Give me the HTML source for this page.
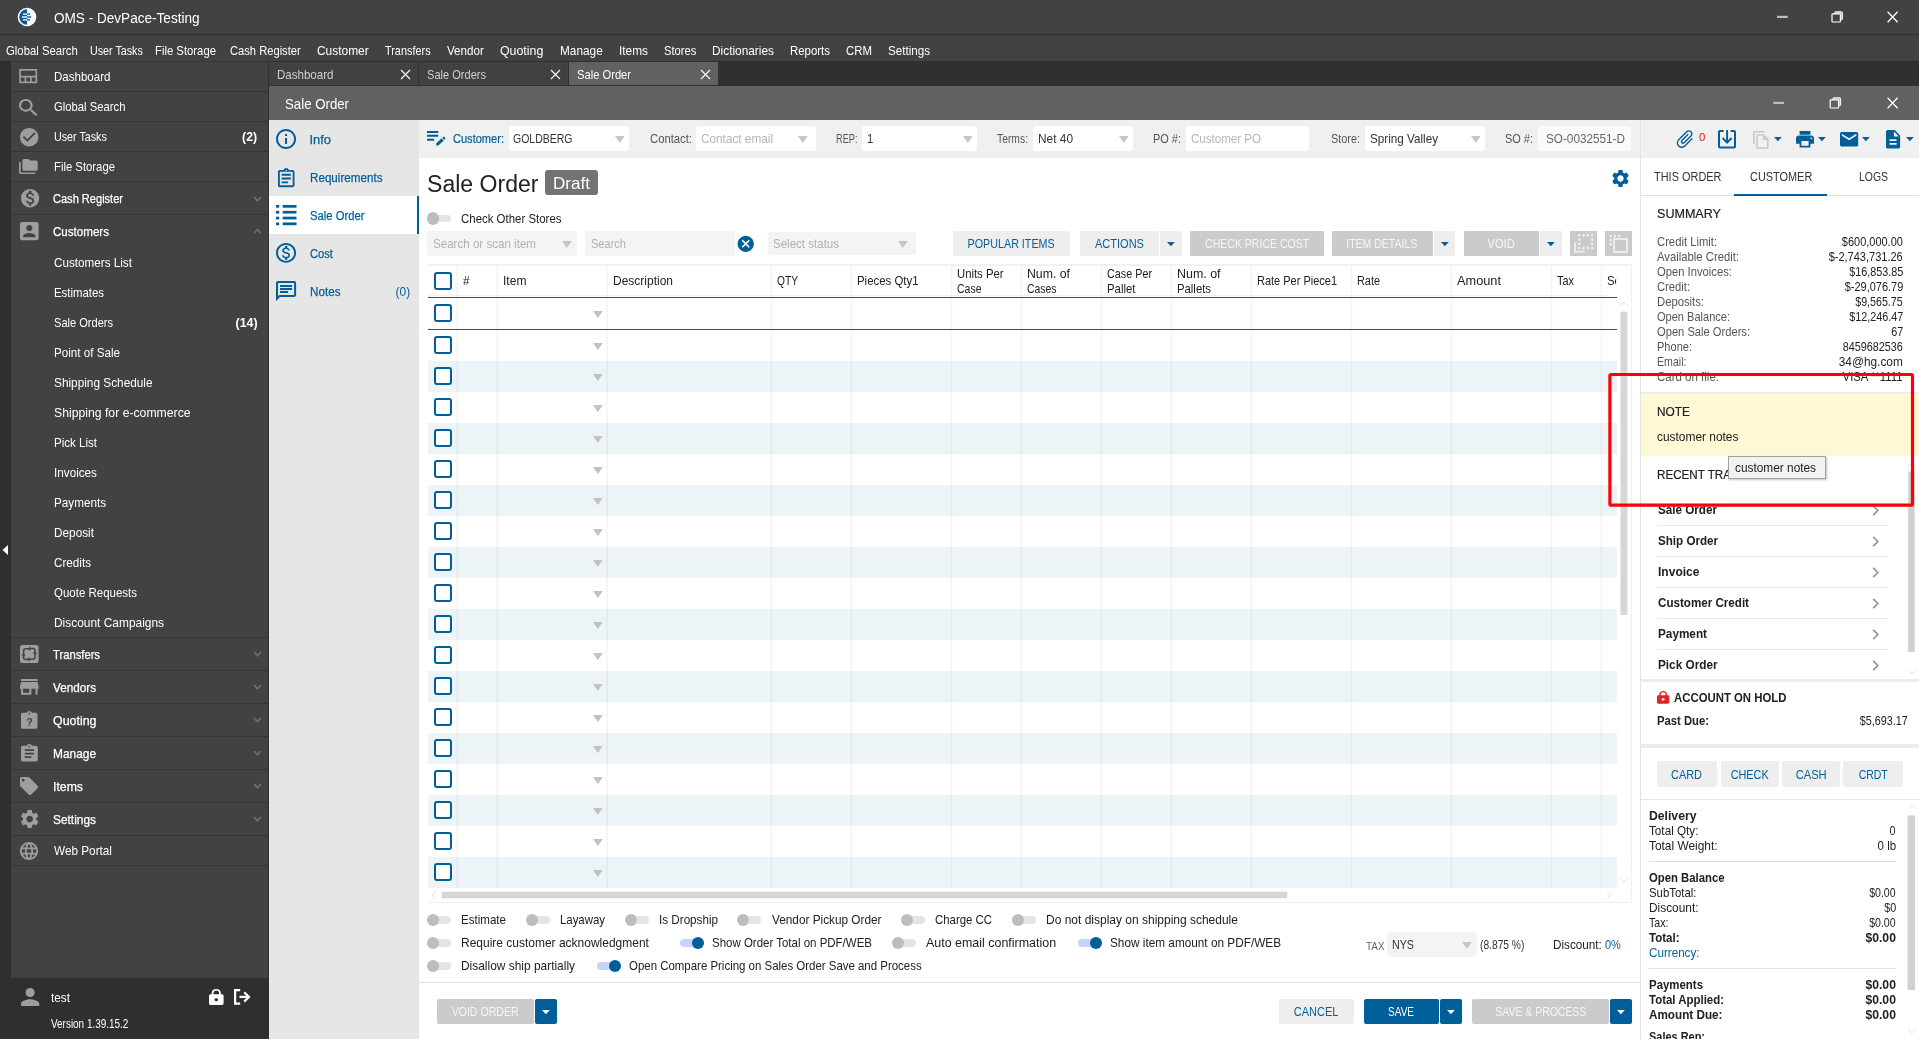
<!DOCTYPE html>
<html lang="en"><head><meta charset="utf-8"><title>OMS - DevPace-Testing</title>
<style>
html,body{margin:0;padding:0;background:#424242;}
body{width:1919px;height:1039px;overflow:hidden;font-family:"Liberation Sans",sans-serif;}
#root{will-change:transform;position:relative;width:1919px;height:1039px;overflow:hidden;background:#fff;}
#root div,#root span.t,#root svg.ic{position:absolute;}
span.t{white-space:pre;}
svg.ic{display:block;overflow:visible;}
#root div.g{left:0;top:0;width:0;height:0;}

</style></head>
<body>
<div id="root">
<div class="g" id="window-chrome-and-sidebar">
<div style="left:0px;top:0px;width:1919px;height:34px;background:#424242;"></div>
<div style="left:0px;top:34px;width:1919px;height:1px;background:#303030;"></div>
<div style="left:0px;top:35px;width:1919px;height:26px;background:#424242;"></div>
<svg class="ic" style="left:17px;top:7px" width="20" height="20" viewBox="0 0 20 20"><circle cx="10" cy="10" r="9.3" fill="#fff"/><path d="M10 2.2 A7.8 7.8 0 0 0 10 17.800 Z" fill="#0a5a9c"/><rect x="6" y="6.500" width="4" height="1.300" fill="#fff"/><rect x="5" y="9.300" width="5" height="1.400" fill="#fff"/><rect x="6" y="12.200" width="4" height="1.300" fill="#fff"/><rect x="10" y="6.500" width="3" height="1.300" fill="#0a5a9c"/><rect x="10" y="9.300" width="4.200" height="1.400" fill="#0a5a9c"/><rect x="10" y="12.200" width="3" height="1.300" fill="#0a5a9c"/></svg>
<span class="t" style="left:54px;top:8.2px;line-height:20px;font-size:14.42px;color:#fff;transform:scaleX(0.942);transform-origin:0 50%;">OMS - DevPace-Testing</span>
<svg class="ic" style="left:1760px;top:0" width="159" height="125" viewBox="1760 0 159 125" fill="none" stroke="#fff" stroke-width="1"><path d="M1777.0 16.9h10.800" stroke="#bdbdbd" stroke-width="2.200"/><rect x="1834.8" y="11.799999999999999" width="7.600" height="7.800" rx=".6" fill="#b4b4b4" stroke-width="1"/><rect x="1832.0" y="13.799999999999999" width="8.400" height="8.200" rx=".8" fill="#424242" stroke-width="1.200"/><path d="M1887.6 11.8l10 10.400 M1897.6 11.8l-10 10.400" stroke-width="1.300"/></svg>
<span class="t" style="left:6px;top:42.5px;line-height:16px;font-size:12.36px;color:#fff;transform:scaleX(0.917);transform-origin:0 50%;">Global Search</span>
<span class="t" style="left:90px;top:42.5px;line-height:16px;font-size:12.36px;color:#fff;transform:scaleX(0.867);transform-origin:0 50%;">User Tasks</span>
<span class="t" style="left:155px;top:42.5px;line-height:16px;font-size:12.36px;color:#fff;transform:scaleX(0.915);transform-origin:0 50%;">File Storage</span>
<span class="t" style="left:230px;top:42.5px;line-height:16px;font-size:12.36px;color:#fff;transform:scaleX(0.903);transform-origin:0 50%;">Cash Register</span>
<span class="t" style="left:317px;top:42.5px;line-height:16px;font-size:12.36px;color:#fff;transform:scaleX(0.965);transform-origin:0 50%;">Customer</span>
<span class="t" style="left:385px;top:42.5px;line-height:16px;font-size:12.36px;color:#fff;transform:scaleX(0.881);transform-origin:0 50%;">Transfers</span>
<span class="t" style="left:447px;top:42.5px;line-height:16px;font-size:12.36px;color:#fff;transform:scaleX(0.939);transform-origin:0 50%;">Vendor</span>
<span class="t" style="left:500px;top:42.5px;line-height:16px;font-size:12.36px;color:#fff;">Quoting</span>
<span class="t" style="left:560px;top:42.5px;line-height:16px;font-size:12.36px;color:#fff;transform:scaleX(0.956);transform-origin:0 50%;">Manage</span>
<span class="t" style="left:619px;top:42.5px;line-height:16px;font-size:12.36px;color:#fff;transform:scaleX(0.960);transform-origin:0 50%;">Items</span>
<span class="t" style="left:663.6px;top:42.5px;line-height:16px;font-size:12.36px;color:#fff;transform:scaleX(0.907);transform-origin:0 50%;">Stores</span>
<span class="t" style="left:712px;top:42.5px;line-height:16px;font-size:12.36px;color:#fff;transform:scaleX(0.960);transform-origin:0 50%;">Dictionaries</span>
<span class="t" style="left:790px;top:42.5px;line-height:16px;font-size:12.36px;color:#fff;transform:scaleX(0.924);transform-origin:0 50%;">Reports</span>
<span class="t" style="left:846px;top:42.5px;line-height:16px;font-size:12.36px;color:#fff;transform:scaleX(0.923);transform-origin:0 50%;">CRM</span>
<span class="t" style="left:888px;top:42.5px;line-height:16px;font-size:12.36px;color:#fff;transform:scaleX(0.940);transform-origin:0 50%;">Settings</span>
<div style="left:0px;top:61px;width:11px;height:978px;background:#2f2f2f;"></div>
<svg class="ic" style="left:1px;top:544px" width="8" height="12" viewBox="0 0 8 12"><path d="M7 1v10L1.500 6z" fill="#fff"/></svg>
<div style="left:11px;top:61px;width:257px;height:917px;background:#424242;"></div>
<div style="left:0px;top:978px;width:268px;height:61px;background:#2f2f2f;"></div>
<div style="left:268px;top:61px;width:1px;height:978px;background:#303030;"></div>
<div style="left:11px;top:61px;width:257px;height:1px;background:#353535;"></div>
<div style="left:11px;top:91px;width:257px;height:1px;background:#353535;"></div>
<div style="left:11px;top:121px;width:257px;height:1px;background:#353535;"></div>
<div style="left:11px;top:151px;width:257px;height:1px;background:#353535;"></div>
<div style="left:11px;top:181px;width:257px;height:1px;background:#353535;"></div>
<div style="left:11px;top:214px;width:257px;height:1px;background:#353535;"></div>
<div style="left:11px;top:637px;width:257px;height:1px;background:#353535;"></div>
<div style="left:11px;top:670px;width:257px;height:1px;background:#353535;"></div>
<div style="left:11px;top:703px;width:257px;height:1px;background:#353535;"></div>
<div style="left:11px;top:736px;width:257px;height:1px;background:#353535;"></div>
<div style="left:11px;top:769px;width:257px;height:1px;background:#353535;"></div>
<div style="left:11px;top:802px;width:257px;height:1px;background:#353535;"></div>
<div style="left:11px;top:835px;width:257px;height:1px;background:#353535;"></div>
<div style="left:11px;top:865px;width:257px;height:1px;background:#353535;"></div>
<svg class="ic" style="left:19.3px;top:69.4px" width="18.400" height="14.200" viewBox="0 0 18 14.200" fill="none" stroke="#9e9e9e" stroke-width="1.700"><rect x=".85" y=".85" width="16.300" height="12.500"/><path d="M.85 7.600h16.300M6.250 7.600v6M11.750 7.600v6"/></svg>
<span class="t" style="left:54px;top:68.5px;line-height:16px;font-size:12.36px;color:#fff;transform:scaleX(0.934);transform-origin:0 50%;">Dashboard</span>
<svg class="ic" style="left:19.2px;top:98.5px" width="18.4" height="17" viewBox="3 3 17.49 17.49" preserveAspectRatio="none" fill="#9e9e9e"><path d="M15.5 14h-.79l-.28-.27C15.41 12.59 16 11.11 16 9.5 16 5.91 13.09 3 9.5 3S3 5.91 3 9.5 5.91 16 9.5 16c1.61 0 3.09-.59 4.23-1.57l.27.28v.79l5 4.99L20.49 19l-4.99-5zm-6 0C7.01 14 5 11.99 5 9.5S7.01 5 9.5 5 14 7.01 14 9.5 11.99 14 9.5 14z"/></svg>
<span class="t" style="left:54px;top:98.5px;line-height:16px;font-size:12.36px;color:#fff;transform:scaleX(0.913);transform-origin:0 50%;">Global Search</span>
<svg class="ic" style="left:19.5px;top:127.6px" width="18.4" height="18.4" viewBox="2 2 20 20" preserveAspectRatio="none" fill="#9e9e9e"><path d="M12 2C6.48 2 2 6.48 2 12s4.48 10 10 10 10-4.48 10-10S17.52 2 12 2zm-2 15l-5-5 1.41-1.41L10 14.17l7.59-7.59L19 8l-9 9z"/></svg>
<span class="t" style="left:54px;top:128.5px;line-height:16px;font-size:12.36px;color:#fff;transform:scaleX(0.867);transform-origin:0 50%;">User Tasks</span>
<span class="t" style="left:242.39px;top:128.5px;line-height:16px;font-size:12.36px;color:#fff;transform:scaleX(0.993);transform-origin:100% 50%;font-weight:700;">(2)</span>
<svg class="ic" style="left:19.2px;top:158.8px" width="18.7" height="15" viewBox="1 2 22 19" preserveAspectRatio="none" fill="#9e9e9e"><path d="M3 6H1v13c0 1.1.9 2 2 2h17v-2H3V6zM21 4h-7l-2-2H7c-1.1 0-1.99.9-1.99 2L5 15c0 1.1.9 2 2 2h14c1.1 0 2-.9 2-2V6c0-1.1-.9-2-2-2z"/></svg>
<span class="t" style="left:54px;top:158.5px;line-height:16px;font-size:12.36px;color:#fff;transform:scaleX(0.915);transform-origin:0 50%;">File Storage</span>
<svg class="ic" style="left:20.7px;top:189px" width="18.2" height="18.4" viewBox="2 2 20 20" preserveAspectRatio="none" fill="#9e9e9e"><path d="M12 2C6.48 2 2 6.48 2 12s4.48 10 10 10 10-4.48 10-10S17.52 2 12 2zm1.41 16.09V20h-2.67v-1.93c-1.71-.36-3.16-1.46-3.27-3.4h1.96c.1 1.05.82 1.87 2.65 1.87 1.96 0 2.4-.98 2.4-1.59 0-.83-.44-1.61-2.67-2.14-2.48-.6-4.18-1.62-4.18-3.67 0-1.72 1.39-2.84 3.11-3.21V4h2.67v1.95c1.86.45 2.79 1.86 2.85 3.39H14.3c-.05-1.11-.64-1.87-2.22-1.87-1.5 0-2.4.68-2.4 1.64 0 .84.65 1.39 2.67 1.91s4.18 1.39 4.18 3.91c-.01 1.83-1.38 2.83-3.12 3.16z"/></svg>
<span class="t" style="left:53px;top:190.5px;line-height:16px;font-size:12.36px;color:#fff;transform:scaleX(0.894);transform-origin:0 50%;-webkit-text-stroke:.25px #fff;">Cash Register</span>
<svg class="ic" style="left:20.3px;top:222px" width="18.6" height="18.3" viewBox="3 3 18 18" preserveAspectRatio="none" fill="#9e9e9e"><path d="M3 5v14c0 1.1.89 2 2 2h14c1.1 0 2-.9 2-2V5c0-1.1-.9-2-2-2H5c-1.11 0-2 .9-2 2zm12 4c0 1.66-1.34 3-3 3s-3-1.34-3-3 1.34-3 3-3 3 1.34 3 3zm-9 8c0-2 4-3.1 6-3.1s6 1.1 6 3.1v1H6v-1z"/></svg>
<span class="t" style="left:53px;top:223.5px;line-height:16px;font-size:12.36px;color:#fff;transform:scaleX(0.937);transform-origin:0 50%;-webkit-text-stroke:.25px #fff;">Customers</span>
<svg class="ic" style="left:253.0px;top:195.5px" width="9" height="6.200" viewBox="0 0 9 6.200" fill="none" stroke="#6e6e6e" stroke-width="1.700"><path d="M1 1l3.500 3.700 3.500-3.700"/></svg>
<svg class="ic" style="left:253.0px;top:228px" width="9" height="6.200" viewBox="0 0 9 6.200" fill="none" stroke="#6e6e6e" stroke-width="1.700"><path d="M1 5.200l3.500-3.700 3.500 3.700"/></svg>
<span class="t" style="left:54px;top:254.5px;line-height:16px;font-size:12.36px;color:#fff;transform:scaleX(0.946);transform-origin:0 50%;">Customers List</span>
<span class="t" style="left:54px;top:284.5px;line-height:16px;font-size:12.36px;color:#fff;transform:scaleX(0.921);transform-origin:0 50%;">Estimates</span>
<span class="t" style="left:54px;top:314.5px;line-height:16px;font-size:12.36px;color:#fff;transform:scaleX(0.895);transform-origin:0 50%;">Sale Orders</span>
<span class="t" style="left:54px;top:344.5px;line-height:16px;font-size:12.36px;color:#fff;transform:scaleX(0.942);transform-origin:0 50%;">Point of Sale</span>
<span class="t" style="left:54px;top:374.5px;line-height:16px;font-size:12.36px;color:#fff;transform:scaleX(0.956);transform-origin:0 50%;">Shipping Schedule</span>
<span class="t" style="left:54px;top:404.5px;line-height:16px;font-size:12.36px;color:#fff;transform:scaleX(0.989);transform-origin:0 50%;">Shipping for e-commerce</span>
<span class="t" style="left:54px;top:434.5px;line-height:16px;font-size:12.36px;color:#fff;transform:scaleX(0.934);transform-origin:0 50%;">Pick List</span>
<span class="t" style="left:54px;top:464.5px;line-height:16px;font-size:12.36px;color:#fff;transform:scaleX(0.948);transform-origin:0 50%;">Invoices</span>
<span class="t" style="left:54px;top:494.5px;line-height:16px;font-size:12.36px;color:#fff;transform:scaleX(0.946);transform-origin:0 50%;">Payments</span>
<span class="t" style="left:54px;top:524.5px;line-height:16px;font-size:12.36px;color:#fff;transform:scaleX(0.955);transform-origin:0 50%;">Deposit</span>
<span class="t" style="left:54px;top:554.5px;line-height:16px;font-size:12.36px;color:#fff;transform:scaleX(0.945);transform-origin:0 50%;">Credits</span>
<span class="t" style="left:54px;top:584.5px;line-height:16px;font-size:12.36px;color:#fff;transform:scaleX(0.929);transform-origin:0 50%;">Quote Requests</span>
<span class="t" style="left:54px;top:614.5px;line-height:16px;font-size:12.36px;color:#fff;transform:scaleX(0.965);transform-origin:0 50%;">Discount Campaigns</span>
<span class="t" style="left:235.52px;top:314.5px;line-height:16px;font-size:12.36px;color:#fff;font-weight:700;">(14)</span>
<svg class="ic" style="left:20.3px;top:645px" width="18.6" height="18" viewBox="0 0 18.6 18"><rect x="0" y="0" width="18.6" height="18" rx="2.600" fill="#9e9e9e"/><g fill="none" stroke="#424242" stroke-width="1.500"><path d="M3.600 8V5.800Q3.600 3.800 5.600 3.800H9.500"/><path d="M10.600 3.600H13Q15 3.600 15 5.600V8.500"/><path d="M15 10V12.200Q15 14.200 13 14.200H9.100"/><path d="M8 14.400H5.600Q3.600 14.400 3.600 12.400V9.500"/></g><g fill="#424242"><path d="M9 1.600l2.800 2.200L9 6z"/><path d="M12.800 7.600l2.200 2.800 2.200-2.800z"/><path d="M9.600 12l-2.800 2.200 2.800 2.200z"/><path d="M1.400 10.400l2.200-2.800 2.200 2.800z"/></g></svg>
<span class="t" style="left:53px;top:646.5px;line-height:16px;font-size:12.36px;color:#fff;transform:scaleX(0.908);transform-origin:0 50%;-webkit-text-stroke:.25px #fff;">Transfers</span>
<svg class="ic" style="left:253.0px;top:651px" width="9" height="6.200" viewBox="0 0 9 6.200" fill="none" stroke="#6e6e6e" stroke-width="1.700"><path d="M1 1l3.500 3.700 3.500-3.700"/></svg>
<svg class="ic" style="left:20.3px;top:679.1px" width="18.6" height="15.7" viewBox="3 4 18 16" preserveAspectRatio="none" fill="#9e9e9e"><path d="M20 4H4v2h16V4zm1 10v-2l-1-5H4l-1 5v2h1v6h10v-6h4v6h2v-6h1zm-9 4H6v-4h6v4z"/></svg>
<span class="t" style="left:53px;top:679.5px;line-height:16px;font-size:12.36px;color:#fff;transform:scaleX(0.948);transform-origin:0 50%;-webkit-text-stroke:.25px #fff;">Vendors</span>
<svg class="ic" style="left:253.0px;top:684px" width="9" height="6.200" viewBox="0 0 9 6.200" fill="none" stroke="#6e6e6e" stroke-width="1.700"><path d="M1 1l3.500 3.700 3.500-3.700"/></svg>
<svg class="ic" style="left:21.3px;top:711.2px" width="16.5" height="17.8" viewBox="3 1 18 20" preserveAspectRatio="none" fill="#9e9e9e"><path d="M19 3h-4.18C14.4 1.84 13.3 1 12 1c-1.3 0-2.4.84-2.82 2H5c-1.1 0-2 .9-2 2v14c0 1.1.9 2 2 2h14c1.1 0 2-.9 2-2V5c0-1.1-.9-2-2-2zm-7 0c.55 0 1 .45 1 1s-.45 1-1 1-1-.45-1-1 .45-1 1-1z"/></svg>
<span class="t" style="left:26.30px;top:713.5px;line-height:16px;font-size:10.81px;color:#424242;font-weight:700;">?</span>
<span class="t" style="left:53px;top:712.5px;line-height:16px;font-size:12.36px;color:#fff;transform:scaleX(1.005);transform-origin:0 50%;-webkit-text-stroke:.25px #fff;">Quoting</span>
<svg class="ic" style="left:253.0px;top:717px" width="9" height="6.200" viewBox="0 0 9 6.200" fill="none" stroke="#6e6e6e" stroke-width="1.700"><path d="M1 1l3.500 3.700 3.500-3.700"/></svg>
<svg class="ic" style="left:21.2px;top:744.3px" width="16.8" height="17.5" viewBox="3 1 18 20" preserveAspectRatio="none" fill="#9e9e9e"><path d="M19 3h-4.18C14.4 1.84 13.3 1 12 1c-1.3 0-2.4.84-2.82 2H5c-1.1 0-2 .9-2 2v14c0 1.1.9 2 2 2h14c1.1 0 2-.9 2-2V5c0-1.1-.9-2-2-2zm-7 0c.55 0 1 .45 1 1s-.45 1-1 1-1-.45-1-1 .45-1 1-1zm2 14H7v-2h7v2zm3-4H7v-2h10v2zm0-4H7V7h10v2z"/></svg>
<span class="t" style="left:53px;top:745.5px;line-height:16px;font-size:12.36px;color:#fff;transform:scaleX(0.963);transform-origin:0 50%;-webkit-text-stroke:.25px #fff;">Manage</span>
<svg class="ic" style="left:253.0px;top:750px" width="9" height="6.200" viewBox="0 0 9 6.200" fill="none" stroke="#6e6e6e" stroke-width="1.700"><path d="M1 1l3.500 3.700 3.500-3.700"/></svg>
<svg class="ic" style="left:20.4px;top:777.2px" width="18.1" height="18.1" viewBox="2 2 20 20" preserveAspectRatio="none" fill="#9e9e9e"><path d="M21.41 11.58l-9-9C12.05 2.22 11.55 2 11 2H4c-1.1 0-2 .9-2 2v7c0 .55.22 1.05.59 1.42l9 9c.36.36.86.58 1.41.58.55 0 1.05-.22 1.41-.59l7-7c.37-.36.59-.86.59-1.41 0-.55-.23-1.06-.59-1.42zM5.5 7C4.67 7 4 6.33 4 5.5S4.67 4 5.5 4 7 4.67 7 5.5 6.33 7 5.5 7z"/></svg>
<span class="t" style="left:53px;top:778.5px;line-height:16px;font-size:12.36px;color:#fff;transform:scaleX(0.993);transform-origin:0 50%;-webkit-text-stroke:.25px #fff;">Items</span>
<svg class="ic" style="left:253.0px;top:783px" width="9" height="6.200" viewBox="0 0 9 6.200" fill="none" stroke="#6e6e6e" stroke-width="1.700"><path d="M1 1l3.500 3.700 3.500-3.700"/></svg>
<svg class="ic" style="left:20.7px;top:810px" width="17.3" height="18" viewBox="2.662 2.4 18.676 19.2" preserveAspectRatio="none" fill="#9e9e9e"><path d="M19.14 12.94c.04-.3.06-.61.06-.94 0-.32-.02-.64-.07-.94l2.03-1.58c.18-.14.23-.41.12-.61l-1.92-3.32c-.12-.22-.37-.29-.59-.22l-2.39.96c-.5-.38-1.03-.7-1.62-.94l-.36-2.54c-.04-.24-.24-.41-.48-.41h-3.84c-.24 0-.43.17-.47.41l-.36 2.54c-.59.24-1.13.57-1.62.94l-2.39-.96c-.22-.08-.47 0-.59.22L2.74 8.87c-.12.21-.08.47.12.61l2.03 1.58c-.05.3-.09.63-.09.94s.02.64.07.94l-2.03 1.58c-.18.14-.23.41-.12.61l1.92 3.32c.12.22.37.29.59.22l2.39-.96c.5.38 1.03.7 1.62.94l.36 2.54c.05.24.24.41.48.41h3.84c.24 0 .44-.17.47-.41l.36-2.54c.59-.24 1.13-.56 1.62-.94l2.39.96c.22.08.47 0 .59-.22l1.92-3.32c.12-.22.07-.47-.12-.61l-2.01-1.58zM12 15.6c-1.98 0-3.6-1.62-3.6-3.6s1.62-3.6 3.6-3.6 3.6 1.62 3.6 3.6-1.62 3.6-3.6 3.6z"/></svg>
<span class="t" style="left:53px;top:811.5px;line-height:16px;font-size:12.36px;color:#fff;transform:scaleX(0.963);transform-origin:0 50%;-webkit-text-stroke:.25px #fff;">Settings</span>
<svg class="ic" style="left:253.0px;top:816px" width="9" height="6.200" viewBox="0 0 9 6.200" fill="none" stroke="#6e6e6e" stroke-width="1.700"><path d="M1 1l3.500 3.700 3.500-3.700"/></svg>
<svg class="ic" style="left:20px;top:841.7px" width="18" height="18" viewBox="2 2 20 20" preserveAspectRatio="none" fill="#9e9e9e"><path d="M11.99 2C6.47 2 2 6.48 2 12s4.47 10 9.99 10C17.52 22 22 17.52 22 12S17.52 2 11.99 2zm6.93 6h-2.95c-.32-1.25-.78-2.45-1.38-3.56 1.84.63 3.37 1.91 4.33 3.56zM12 4.04c.83 1.2 1.48 2.53 1.91 3.96h-3.82c.43-1.43 1.08-2.76 1.91-3.96zM4.26 14C4.1 13.36 4 12.69 4 12s.1-1.36.26-2h3.38c-.08.66-.14 1.32-.14 2 0 .68.06 1.34.14 2H4.26zm.82 2h2.95c.32 1.25.78 2.45 1.38 3.56-1.84-.63-3.37-1.9-4.33-3.56zm2.95-8H5.08c.96-1.66 2.49-2.93 4.33-3.56C8.81 5.55 8.35 6.75 8.03 8zM12 19.96c-.83-1.2-1.48-2.53-1.91-3.96h3.82c-.43 1.43-1.08 2.76-1.91 3.96zM14.34 14H9.66c-.09-.66-.16-1.32-.16-2 0-.68.07-1.35.16-2h4.68c.09.65.16 1.32.16 2 0 .68-.07 1.34-.16 2zm.25 5.56c.6-1.11 1.06-2.31 1.38-3.56h2.95c-.96 1.65-2.49 2.93-4.33 3.56zM16.36 14c.08-.66.14-1.32.14-2 0-.68-.06-1.34-.14-2h3.38c.16.64.26 1.31.26 2s-.1 1.36-.26 2h-3.38z"/></svg>
<span class="t" style="left:54px;top:842.5px;line-height:16px;font-size:12.36px;color:#fff;transform:scaleX(0.952);transform-origin:0 50%;">Web Portal</span>
<svg class="ic" style="left:20.8px;top:988px" width="18.3" height="18" viewBox="4 4 16 16" preserveAspectRatio="none" fill="#9e9e9e"><path d="M12 12c2.21 0 4-1.79 4-4s-1.79-4-4-4-4 1.79-4 4 1.79 4 4 4zm0 2c-2.67 0-8 1.34-8 4v2h16v-2c0-2.66-5.33-4-8-4z"/></svg>
<span class="t" style="left:51px;top:990px;line-height:16px;font-size:12.36px;color:#fff;transform:scaleX(0.954);transform-origin:0 50%;">test</span>
<svg class="ic" style="left:208.7px;top:989px" width="14.6" height="16" viewBox="4 1 16 21" preserveAspectRatio="none" fill="#fff"><path d="M18 8h-1V6c0-2.76-2.24-5-5-5S7 3.24 7 6v2H6c-1.1 0-2 .9-2 2v10c0 1.1.9 2 2 2h12c1.1 0 2-.9 2-2V10c0-1.1-.9-2-2-2zm-6 9c-1.1 0-2-.9-2-2s.9-2 2-2 2 .9 2 2-.9 2-2 2zm3.1-9H8.9V6c0-1.71 1.39-3.1 3.1-3.1 1.71 0 3.1 1.39 3.1 3.1v2z"/></svg>
<svg class="ic" style="left:233.9px;top:989px" width="16.4" height="15.8" viewBox="0 0 16.4 15.8" fill="none" stroke="#fff"><path d="M6.200 1.100H1.100V14.700H6.200" stroke-width="2.200"/><path d="M5.500 7.900H14" stroke-width="2.300"/><path d="M10.200 3.200L15 7.900L10.200 12.600" stroke-width="2.200"/></svg>
<span class="t" style="left:51px;top:1015.5px;line-height:16px;font-size:12.36px;color:#fff;transform:scaleX(0.804);transform-origin:0 50%;">Version 1.39.15.2</span>
</div>
<div class="g" id="tabs-nav-and-order-header">
<div style="left:269px;top:61px;width:1650px;height:25px;background:#303030;"></div>
<div style="left:269px;top:62px;width:149px;height:23px;background:#414141;"></div>
<div style="left:419px;top:62px;width:149px;height:23px;background:#414141;"></div>
<div style="left:569px;top:62px;width:149px;height:23px;background:#616161;"></div>
<span class="t" style="left:277px;top:67px;line-height:16px;font-size:12.36px;color:#d0d0d0;transform:scaleX(0.934);transform-origin:0 50%;">Dashboard</span>
<span class="t" style="left:427px;top:67px;line-height:16px;font-size:12.36px;color:#d0d0d0;transform:scaleX(0.895);transform-origin:0 50%;">Sale Orders</span>
<span class="t" style="left:577px;top:67px;line-height:16px;font-size:12.36px;color:#fff;transform:scaleX(0.904);transform-origin:0 50%;">Sale Order</span>
<svg class="ic" style="left:400.0px;top:69.0px" width="11.0" height="11.0" viewBox="-5.5 -5.5 11.0 11.0" stroke="#fff" stroke-width="1.1"><path d="M-4.5 -4.5L4.5 4.5M4.5 -4.5L-4.5 4.5"/></svg>
<svg class="ic" style="left:550.0px;top:69.0px" width="11.0" height="11.0" viewBox="-5.5 -5.5 11.0 11.0" stroke="#fff" stroke-width="1.1"><path d="M-4.5 -4.5L4.5 4.5M4.5 -4.5L-4.5 4.5"/></svg>
<svg class="ic" style="left:700.0px;top:69.0px" width="11.0" height="11.0" viewBox="-5.5 -5.5 11.0 11.0" stroke="#fff" stroke-width="1.1"><path d="M-4.5 -4.5L4.5 4.5M4.5 -4.5L-4.5 4.5"/></svg>
<div style="left:269px;top:86px;width:1650px;height:34px;background:#616161;"></div>
<span class="t" style="left:285px;top:94px;line-height:20px;font-size:14.42px;color:#fff;transform:scaleX(0.919);transform-origin:0 50%;">Sale Order</span>
<svg class="ic" style="left:1760px;top:0" width="159" height="125" viewBox="1760 0 159 125" fill="none" stroke="#fff" stroke-width="1"><path d="M1773.1999999999998 102.9h10.800" stroke="#bdbdbd" stroke-width="2.200"/><rect x="1833.0" y="97.80000000000001" width="7.600" height="7.800" rx=".6" fill="#b4b4b4" stroke-width="1"/><rect x="1830.2" y="99.80000000000001" width="8.400" height="8.200" rx=".8" fill="#616161" stroke-width="1.200"/><path d="M1887.6 97.8l10 10.400 M1897.6 97.8l-10 10.400" stroke-width="1.300"/></svg>
<div style="left:269px;top:120px;width:150px;height:919px;background:#e6e6e6;"></div>
<div style="left:269px;top:196px;width:150px;height:38px;background:#ffffff;"></div>
<div style="left:417px;top:196px;width:2px;height:38px;background:#005f98;"></div>
<svg class="ic" style="left:276.3px;top:128.8px" width="20.1" height="20.1" viewBox="2 2 20 20" preserveAspectRatio="none" fill="#005f98"><path d="M11 7h2v2h-2zm0 4h2v6h-2zm1-9C6.48 2 2 6.48 2 12s4.48 10 10 10 10-4.48 10-10S17.52 2 12 2zm0 18c-4.41 0-8-3.59-8-8s3.59-8 8-8 8 3.59 8 8-3.59 8-8 8z"/></svg>
<span class="t" style="left:309.5px;top:132px;line-height:16px;font-size:12.88px;color:#005f98;-webkit-text-stroke:.25px #005f98;">Info</span>
<svg class="ic" style="left:278.1px;top:167.5px" width="16.5" height="19.2" viewBox="3 1 18 20" preserveAspectRatio="none" fill="#005f98"><path d="M7 15h7v2H7zm0-4h10v2H7zm0-4h10v2H7zm12-4h-4.18C14.4 1.84 13.3 1 12 1c-1.3 0-2.4.84-2.82 2H5c-.14 0-.27.01-.4.04-.39.08-.74.28-1.01.55-.18.18-.33.4-.43.64-.1.23-.16.49-.16.77v14c0 .27.06.54.16.78s.25.45.43.64c.27.27.62.47 1.01.55.13.02.26.03.4.03h14c1.1 0 2-.9 2-2V5c0-1.1-.9-2-2-2zm-7-.25c.41 0 .75.34.75.75s-.34.75-.75.75-.75-.34-.75-.75.34-.75.75-.75zM19 19H5V5h14v14z"/></svg>
<span class="t" style="left:309.5px;top:170px;line-height:16px;font-size:12.88px;color:#005f98;transform:scaleX(0.904);transform-origin:0 50%;-webkit-text-stroke:.25px #005f98;">Requirements</span>
<svg class="ic" style="left:276.3px;top:205px" width="20.5" height="20.200" viewBox="0 0 20.5 20.200" fill="#005f98"><rect x="0" y="0" width="3.200" height="2.700"/><rect x="6.700" y="0" width="13.800" height="2.700"/><rect x="0" y="5.85" width="3.200" height="2.700"/><rect x="6.700" y="5.85" width="13.800" height="2.700"/><rect x="0" y="11.7" width="3.200" height="2.700"/><rect x="6.700" y="11.7" width="13.800" height="2.700"/><rect x="0" y="17.5" width="3.200" height="2.700"/><rect x="6.700" y="17.5" width="13.800" height="2.700"/></svg>
<span class="t" style="left:309.5px;top:208px;line-height:16px;font-size:12.88px;color:#005f98;transform:scaleX(0.875);transform-origin:0 50%;-webkit-text-stroke:.25px #005f98;">Sale Order</span>
<svg class="ic" style="left:276.3px;top:243.4px" width="20.1" height="19.8" viewBox="2 2 20 20" preserveAspectRatio="none" fill="#005f98"><path d="M12 2C6.48 2 2 6.48 2 12s4.48 10 10 10 10-4.48 10-10S17.52 2 12 2zm0 18c-4.41 0-8-3.59-8-8s3.59-8 8-8 8 3.59 8 8-3.59 8-8 8zm.31-8.86c-1.77-.45-2.34-.94-2.34-1.67 0-.84.79-1.43 2.1-1.43 1.38 0 1.9.66 1.94 1.64h1.71c-.05-1.34-.87-2.57-2.49-2.97V5H10.9v1.69c-1.51.32-2.72 1.3-2.72 2.81 0 1.79 1.49 2.69 3.66 3.21 1.95.46 2.34 1.15 2.34 1.87 0 .53-.39 1.39-2.1 1.39-1.6 0-2.23-.72-2.32-1.64H8.04c.1 1.7 1.36 2.66 2.86 2.97V19h2.34v-1.67c1.52-.29 2.72-1.16 2.73-2.77-.01-2.2-1.9-2.96-3.66-3.42z"/></svg>
<span class="t" style="left:309.5px;top:246px;line-height:16px;font-size:12.88px;color:#005f98;transform:scaleX(0.868);transform-origin:0 50%;-webkit-text-stroke:.25px #005f98;">Cost</span>
<svg class="ic" style="left:276.3px;top:280.9px" width="20.1" height="20.1" viewBox="2 2 20 20" preserveAspectRatio="none" fill="#005f98"><path d="M4 4h16v12H5.17L4 17.17V4m0-2c-1.1 0-1.99.9-1.99 2L2 22l4-4h14c1.1 0 2-.9 2-2V4c0-1.1-.9-2-2-2H4zm2 10h8v2H6v-2zm0-3h12v2H6V9zm0-3h12v2H6V6z"/></svg>
<span class="t" style="left:309.5px;top:284px;line-height:16px;font-size:12.88px;color:#005f98;transform:scaleX(0.907);transform-origin:0 50%;-webkit-text-stroke:.25px #005f98;">Notes</span>
<span class="t" style="left:395.39px;top:284px;line-height:16px;font-size:12.36px;color:#005f98;transform:scaleX(0.960);transform-origin:100% 50%;">(0)</span>
<div style="left:419px;top:120px;width:1500px;height:38px;background:#f0f0f0;"></div>
<svg class="ic" style="left:426.9px;top:131.2px" width="18.5" height="14.5" viewBox="3 6 18.1325 15" preserveAspectRatio="none" fill="#005f98"><path d="M3 10h11v2H3v-2zm0-2h11V6H3v2zm0 8h7v-2H3v2zm15.01-3.13l.71-.71c.39-.39 1.02-.39 1.41 0l.71.71c.39.39.39 1.02 0 1.41l-.71.71-2.12-2.120zm-.71.71l-5.3 5.3V21h2.120l5.3-5.3-2.120-2.120z"/></svg>
<span class="t" style="left:453px;top:131px;line-height:16px;font-size:12.36px;color:#005f98;transform:scaleX(0.894);transform-origin:0 50%;-webkit-text-stroke:.2px #005f98;">Customer:</span>
<div style="left:509px;top:126px;width:120px;height:25px;background:#fff;border-radius:3px;"></div>
<span class="t" style="left:513px;top:131px;line-height:16px;font-size:12.36px;color:#333;transform:scaleX(0.849);transform-origin:0 50%;">GOLDBERG</span>
<svg class="ic" style="left:615.15px;top:136.05px" width="9.7" height="6.9" viewBox="0 0 9.7 6.9"><path d="M0 0h9.7L4.85 6.9z" fill="#c6c6c6"/></svg>
<span class="t" style="left:649.5px;top:131px;line-height:16px;font-size:12.36px;color:#555;transform:scaleX(0.912);transform-origin:0 50%;">Contact:</span>
<div style="left:696px;top:126px;width:120px;height:25px;background:#fff;border-radius:3px;"></div>
<span class="t" style="left:701px;top:131px;line-height:16px;font-size:12.36px;color:#b5b5b5;transform:scaleX(0.953);transform-origin:0 50%;">Contact email</span>
<svg class="ic" style="left:798.15px;top:136.05px" width="9.7" height="6.9" viewBox="0 0 9.7 6.9"><path d="M0 0h9.7L4.85 6.9z" fill="#c6c6c6"/></svg>
<span class="t" style="left:836px;top:131px;line-height:16px;font-size:12.36px;color:#555;transform:scaleX(0.745);transform-origin:0 50%;">REP:</span>
<div style="left:862px;top:126px;width:115px;height:25px;background:#fff;border-radius:3px;"></div>
<span class="t" style="left:867px;top:131px;line-height:16px;font-size:12.36px;color:#333;transform:scaleX(0.915);transform-origin:0 50%;">1</span>
<svg class="ic" style="left:963.15px;top:136.05px" width="9.7" height="6.9" viewBox="0 0 9.7 6.9"><path d="M0 0h9.7L4.85 6.9z" fill="#c6c6c6"/></svg>
<span class="t" style="left:997px;top:131px;line-height:16px;font-size:12.36px;color:#555;transform:scaleX(0.836);transform-origin:0 50%;">Terms:</span>
<div style="left:1033px;top:126px;width:100px;height:25px;background:#fff;border-radius:3px;"></div>
<span class="t" style="left:1037.5px;top:131px;line-height:16px;font-size:12.36px;color:#333;transform:scaleX(0.961);transform-origin:0 50%;">Net 40</span>
<svg class="ic" style="left:1119.15px;top:136.05px" width="9.7" height="6.9" viewBox="0 0 9.7 6.9"><path d="M0 0h9.7L4.85 6.9z" fill="#c6c6c6"/></svg>
<span class="t" style="left:1153px;top:131px;line-height:16px;font-size:12.36px;color:#555;transform:scaleX(0.886);transform-origin:0 50%;">PO #:</span>
<div style="left:1186px;top:126px;width:123px;height:25px;background:#fff;border-radius:3px;"></div>
<span class="t" style="left:1191px;top:131px;line-height:16px;font-size:12.36px;color:#b5b5b5;transform:scaleX(0.935);transform-origin:0 50%;">Customer PO</span>
<span class="t" style="left:1331px;top:131px;line-height:16px;font-size:12.36px;color:#555;transform:scaleX(0.879);transform-origin:0 50%;">Store:</span>
<div style="left:1365px;top:126px;width:119.5px;height:25px;background:#fff;border-radius:3px;"></div>
<span class="t" style="left:1369.5px;top:131px;line-height:16px;font-size:12.36px;color:#333;transform:scaleX(0.946);transform-origin:0 50%;">Spring Valley</span>
<svg class="ic" style="left:1471.15px;top:136.05px" width="9.7" height="6.9" viewBox="0 0 9.7 6.9"><path d="M0 0h9.7L4.85 6.9z" fill="#c6c6c6"/></svg>
<span class="t" style="left:1505px;top:131px;line-height:16px;font-size:12.36px;color:#555;transform:scaleX(0.886);transform-origin:0 50%;">SO #:</span>
<div style="left:1538px;top:126px;width:93px;height:25px;background:#fafafa;border-radius:3px;"></div>
<span class="t" style="left:1545.5px;top:131px;line-height:16px;font-size:12.36px;color:#666;transform:scaleX(0.950);transform-origin:0 50%;">SO-0032551-D</span>
<div style="left:1640px;top:120px;width:1px;height:919px;background:#e4e4e4;"></div>
<svg class="ic" style="left:1674px;top:128.3px" width="22" height="22" viewBox="0 0 24 24" fill="#005f98"><g transform="rotate(45 12 12)"><path d="M16.5 6v11.5c0 2.21-1.79 4-4 4s-4-1.79-4-4V5c0-1.38 1.12-2.5 2.5-2.5s2.5 1.12 2.5 2.5v10.5c0 .55-.45 1-1 1s-1-.45-1-1V6H10v9.5c0 1.38 1.12 2.5 2.5 2.5s2.5-1.12 2.5-2.5V5c0-2.21-1.79-4-4-4S7 2.79 7 5v12.5c0 3.04 2.46 5.5 5.5 5.5s5.5-2.46 5.5-5.5V6h-1.5z"/></g></svg>
<span class="t" style="left:1699px;top:129px;line-height:16px;font-size:11.33px;color:#f01414;">0</span>
<svg class="ic" style="left:1718px;top:130px" width="18" height="18.400" viewBox="0 0 18 18.400" fill="none" stroke="#005f98" stroke-width="2"><path d="M5.600 1H2Q1 1 1 2V16.400Q1 17.400 2 17.400H16Q17 17.400 17 16.400V2Q17 1 16 1H12.600"/><path d="M9.100 0V12" stroke-width="1.900"/><path d="M4.600 8l4.500 4.700 4.500-4.700" stroke-width="1.900"/></svg>
<svg class="ic" style="left:1753.1px;top:130.5px" width="15.6" height="17.8" viewBox="2 1 19 22" preserveAspectRatio="none" fill="#c8c8c8"><path d="M16 1H4c-1.1 0-2 .9-2 2v14h2V3h12V1zm-1 4H8c-1.1 0-1.99.9-1.99 2L6 21c0 1.1.89 2 1.99 2H19c1.1 0 2-.9 2-2V11l-6-6zM8 21V7h6v5h5v9H8z"/></svg>
<svg class="ic" style="left:1773.6999999999998px;top:137px" width="7.800" height="4.200" viewBox="0 0 7.800 4.200"><path d="M0 0h7.800L3.900 4.200z" fill="#005f98"/></svg>
<svg class="ic" style="left:1795.9px;top:131.2px" width="18" height="16.5" viewBox="2 3 20 18" preserveAspectRatio="none" fill="#005f98"><path d="M19 8H5c-1.66 0-3 1.34-3 3v6h4v4h12v-4h4v-6c0-1.66-1.34-3-3-3zm-3 11H8v-5h8v5zm3-7c-.55 0-1-.45-1-1s.45-1 1-1 1 .45 1 1-.45 1-1 1zm-1-9H6v4h12V3z"/></svg>
<svg class="ic" style="left:1817.6999999999998px;top:137px" width="7.800" height="4.200" viewBox="0 0 7.800 4.200"><path d="M0 0h7.800L3.900 4.200z" fill="#005f98"/></svg>
<svg class="ic" style="left:1839.9px;top:132.1px" width="18.2" height="14.5" viewBox="2 4 20 16" preserveAspectRatio="none" fill="#005f98"><path d="M20 4H4c-1.1 0-1.99.9-1.99 2L2 18c0 1.1.9 2 2 2h16c1.1 0 2-.9 2-2V6c0-1.1-.9-2-2-2zm0 4l-8 5-8-5V6l8 5 8-5v2z"/></svg>
<svg class="ic" style="left:1861.6999999999998px;top:137px" width="7.800" height="4.200" viewBox="0 0 7.800 4.200"><path d="M0 0h7.800L3.900 4.200z" fill="#005f98"/></svg>
<svg class="ic" style="left:1886.1px;top:130.1px" width="14.1" height="18.5" viewBox="4 2 16 20" preserveAspectRatio="none" fill="#005f98"><path d="M14 2H6c-1.1 0-1.99.9-1.99 2L4 20c0 1.1.89 2 1.99 2H18c1.1 0 2-.9 2-2V8l-6-6zm2 16H8v-2h8v2zm0-4H8v-2h8v2zm-3-5V3.5L18.5 9H13z"/></svg>
<svg class="ic" style="left:1905.8px;top:137px" width="7.800" height="4.200" viewBox="0 0 7.800 4.200"><path d="M0 0h7.800L3.900 4.200z" fill="#005f98"/></svg>
</div>
<div class="g" id="order-items-grid">
<div style="left:419px;top:158px;width:1221px;height:881px;background:#fff;"></div>
<span class="t" style="left:427.4px;top:169.2px;line-height:30px;font-size:24.72px;color:#212121;transform:scaleX(0.933);transform-origin:0 50%;">Sale Order</span>
<div style="left:545px;top:170px;width:53px;height:24.8px;background:#737373;border-radius:3px;"></div>
<span class="t" style="left:553.1px;top:171.5px;line-height:22px;font-size:16.48px;color:#fff;transform:scaleX(1.036);transform-origin:0 50%;">Draft</span>
<svg class="ic" style="left:1609.8px;top:167.5px" width="21" height="21" viewBox="0 0 24 24" fill="#005f98"><path d="M19.14 12.94c.04-.3.06-.61.06-.94 0-.32-.02-.64-.07-.94l2.03-1.58c.18-.14.23-.41.12-.61l-1.92-3.32c-.12-.22-.37-.29-.59-.22l-2.39.96c-.5-.38-1.03-.7-1.62-.94l-.36-2.54c-.04-.24-.24-.41-.48-.41h-3.84c-.24 0-.43.17-.47.41l-.36 2.54c-.59.24-1.13.57-1.62.94l-2.39-.96c-.22-.08-.47 0-.59.22L2.74 8.87c-.12.21-.08.47.12.61l2.03 1.58c-.05.3-.09.63-.09.94s.02.64.07.94l-2.03 1.58c-.18.14-.23.41-.12.61l1.92 3.32c.12.22.37.29.59.22l2.39-.96c.5.38 1.03.7 1.62.94l.36 2.54c.05.24.24.41.48.41h3.84c.24 0 .44-.17.47-.41l.36-2.54c.59-.24 1.13-.56 1.62-.94l2.39.96c.22.08.47 0 .59-.22l1.92-3.32c.12-.22.07-.47-.12-.61l-2.01-1.58zM12 15.6c-1.98 0-3.6-1.62-3.6-3.6s1.62-3.6 3.6-3.6 3.6 1.62 3.6 3.6-1.62 3.6-3.6 3.6z"/></svg>
<div style="left:430px;top:214.6px;width:21.1px;height:7.8px;background:#e4e4e4;border-radius:4px;"></div>
<div style="left:426.9px;top:212.4px;width:12.2px;height:12.2px;background:#bdbdbd;border-radius:50%;"></div>
<span class="t" style="left:461px;top:211px;line-height:16px;font-size:12.36px;color:#212121;transform:scaleX(0.926);transform-origin:0 50%;">Check Other Stores</span>
<div style="left:427px;top:231px;width:150px;height:24.5px;background:#f4f4f4;border-radius:3px;"></div>
<span class="t" style="left:433px;top:236px;line-height:16px;font-size:12.36px;color:#b0b0b0;transform:scaleX(0.937);transform-origin:0 50%;">Search or scan item</span>
<svg class="ic" style="left:561.65px;top:241.05px" width="9.7" height="6.9" viewBox="0 0 9.7 6.9"><path d="M0 0h9.7L4.85 6.9z" fill="#c6c6c6"/></svg>
<div style="left:585px;top:231px;width:150px;height:24.5px;background:#f4f4f4;border-radius:3px;"></div>
<span class="t" style="left:591px;top:236px;line-height:16px;font-size:12.36px;color:#b0b0b0;transform:scaleX(0.893);transform-origin:0 50%;">Search</span>
<svg class="ic" style="left:736.25px;top:233.75px" width="19.5" height="19.5" viewBox="0 0 24 24" fill="#005f98"><path d="M12 2C6.47 2 2 6.47 2 12s4.47 10 10 10 10-4.47 10-10S17.53 2 12 2zm5 13.59L15.59 17 12 13.41 8.41 17 7 15.59 10.590 12 7 8.410 8.410 7 12 10.590 15.590 7 17 8.410 13.410 12 17 15.590z"/></svg>
<div style="left:768px;top:232px;width:147.5px;height:22.5px;background:#f4f4f4;border-radius:3px;"></div>
<span class="t" style="left:773px;top:236px;line-height:16px;font-size:12.36px;color:#b0b0b0;transform:scaleX(0.933);transform-origin:0 50%;">Select status</span>
<svg class="ic" style="left:898.15px;top:241.05px" width="9.7" height="6.9" viewBox="0 0 9.7 6.9"><path d="M0 0h9.7L4.85 6.9z" fill="#c6c6c6"/></svg>
<div style="left:953px;top:231px;width:116.5px;height:25px;background:#eeeeee;border-radius:1px;"></div>
<span class="t" style="left:961.11px;top:236px;line-height:16px;font-size:12.36px;color:#005f98;transform:scaleX(0.868);transform-origin:50% 50%;">POPULAR ITEMS</span>
<div style="left:1080px;top:231px;width:78.8px;height:25px;background:#eeeeee;border-radius:1px;"></div>
<span class="t" style="left:1091.93px;top:236px;line-height:16px;font-size:12.36px;color:#005f98;transform:scaleX(0.892);transform-origin:50% 50%;">ACTIONS</span>
<div style="left:1160.3px;top:231px;width:21.5px;height:25px;background:#eeeeee;border-radius:1px;"></div>
<svg class="ic" style="left:1167.1499999999999px;top:242.0px" width="7.800" height="4.200" viewBox="0 0 7.800 4.200"><path d="M0 0h7.800L3.900 4.200z" fill="#005f98"/></svg>
<div style="left:1190px;top:231px;width:133.8px;height:25px;background:#cbcbcb;border-radius:1px;"></div>
<span class="t" style="left:1195.78px;top:236px;line-height:16px;font-size:12.36px;color:#f5f5f5;transform:scaleX(0.851);transform-origin:50% 50%;">CHECK PRICE COST</span>
<div style="left:1332px;top:231px;width:100.5px;height:25px;background:#cbcbcb;border-radius:1px;"></div>
<span class="t" style="left:1340.47px;top:236px;line-height:16px;font-size:12.36px;color:#f5f5f5;transform:scaleX(0.850);transform-origin:50% 50%;">ITEM DETAILS</span>
<div style="left:1434.3px;top:231px;width:21.2px;height:25px;background:#eeeeee;border-radius:1px;"></div>
<svg class="ic" style="left:1441.0px;top:242.0px" width="7.800" height="4.200" viewBox="0 0 7.800 4.200"><path d="M0 0h7.800L3.900 4.200z" fill="#005f98"/></svg>
<div style="left:1464.3px;top:231px;width:74.5px;height:25px;background:#cbcbcb;border-radius:1px;"></div>
<span class="t" style="left:1486.44px;top:236px;line-height:16px;font-size:12.36px;color:#f5f5f5;transform:scaleX(0.893);transform-origin:50% 50%;">VOID</span>
<div style="left:1540.3px;top:231px;width:21.7px;height:25px;background:#eeeeee;border-radius:1px;"></div>
<svg class="ic" style="left:1547.25px;top:242.0px" width="7.800" height="4.200" viewBox="0 0 7.800 4.200"><path d="M0 0h7.800L3.900 4.200z" fill="#005f98"/></svg>
<div style="left:1570.3px;top:231px;width:26.5px;height:24.8px;background:#cacaca;"></div>
<div style="left:1605px;top:231px;width:27px;height:24.8px;background:#cacaca;"></div>
<svg class="ic" style="left:1572px;top:240px" width="14" height="14" viewBox="0 0 14 14" fill="none" stroke="#ececec" stroke-width="2"><path d="M3 2.300V11.700H12.500"/></svg>
<div style="left:1613px;top:238.3px;width:15.4px;height:15px;border:2px solid #ececec;box-sizing:border-box;"></div>
<div style="left:427.5px;top:264px;width:1204.8px;height:2px;background:#f1f1f1;"></div>
<div style="left:1631px;top:265px;width:1px;height:638px;background:#f0f0f0;"></div>
<div style="left:427.5px;top:902px;width:1204.8px;height:1px;background:#eeeeee;"></div>
<div style="left:427.5px;top:295px;width:1189.5px;height:1px;background:#f1f1f1;"></div>
<div style="left:427.5px;top:361px;width:1189.5px;height:31px;background:#edf4f8;"></div>
<div style="left:427.5px;top:423px;width:1189.5px;height:31px;background:#edf4f8;"></div>
<div style="left:427.5px;top:485px;width:1189.5px;height:31px;background:#edf4f8;"></div>
<div style="left:427.5px;top:547px;width:1189.5px;height:31px;background:#edf4f8;"></div>
<div style="left:427.5px;top:609px;width:1189.5px;height:31px;background:#edf4f8;"></div>
<div style="left:427.5px;top:671px;width:1189.5px;height:31px;background:#edf4f8;"></div>
<div style="left:427.5px;top:733px;width:1189.5px;height:31px;background:#edf4f8;"></div>
<div style="left:427.5px;top:795px;width:1189.5px;height:31px;background:#edf4f8;"></div>
<div style="left:427.5px;top:857px;width:1189.5px;height:31px;background:#edf4f8;"></div>
<div style="left:427.5px;top:297px;width:1189px;height:1px;background:#005f98;"></div>
<div style="left:427.5px;top:329px;width:1189px;height:1px;background:#005f98;"></div>
<span class="t" style="left:463px;top:273px;line-height:16px;font-size:12.36px;color:#212121;transform:scaleX(0.945);transform-origin:0 50%;">#</span>
<span class="t" style="left:503px;top:273px;line-height:16px;font-size:12.36px;color:#212121;transform:scaleX(0.977);transform-origin:0 50%;">Item</span>
<span class="t" style="left:613px;top:273px;line-height:16px;font-size:12.36px;color:#212121;transform:scaleX(0.970);transform-origin:0 50%;">Description</span>
<span class="t" style="left:777px;top:273px;line-height:16px;font-size:12.36px;color:#212121;transform:scaleX(0.826);transform-origin:0 50%;">QTY</span>
<span class="t" style="left:857px;top:273px;line-height:16px;font-size:12.36px;color:#212121;transform:scaleX(0.923);transform-origin:0 50%;">Pieces Qty1</span>
<span class="t" style="left:1257px;top:273px;line-height:16px;font-size:12.36px;color:#212121;transform:scaleX(0.889);transform-origin:0 50%;">Rate Per Piece1</span>
<span class="t" style="left:1357px;top:273px;line-height:16px;font-size:12.36px;color:#212121;transform:scaleX(0.881);transform-origin:0 50%;">Rate</span>
<span class="t" style="left:1457px;top:273px;line-height:16px;font-size:12.36px;color:#212121;transform:scaleX(1.033);transform-origin:0 50%;">Amount</span>
<span class="t" style="left:1557px;top:273px;line-height:16px;font-size:12.36px;color:#212121;transform:scaleX(0.884);transform-origin:0 50%;">Tax</span>
<span class="t" style="left:957px;top:266px;line-height:16px;font-size:12.36px;color:#212121;transform:scaleX(0.915);transform-origin:0 50%;">Units Per</span>
<span class="t" style="left:957px;top:281px;line-height:16px;font-size:12.36px;color:#212121;transform:scaleX(0.849);transform-origin:0 50%;">Case</span>
<span class="t" style="left:1027px;top:266px;line-height:16px;font-size:12.36px;color:#212121;transform:scaleX(0.994);transform-origin:0 50%;">Num. of</span>
<span class="t" style="left:1027px;top:281px;line-height:16px;font-size:12.36px;color:#212121;transform:scaleX(0.842);transform-origin:0 50%;">Cases</span>
<span class="t" style="left:1107px;top:266px;line-height:16px;font-size:12.36px;color:#212121;transform:scaleX(0.873);transform-origin:0 50%;">Case Per</span>
<span class="t" style="left:1107px;top:281px;line-height:16px;font-size:12.36px;color:#212121;transform:scaleX(0.922);transform-origin:0 50%;">Pallet</span>
<span class="t" style="left:1177px;top:266px;line-height:16px;font-size:12.36px;color:#212121;transform:scaleX(1.005);transform-origin:0 50%;">Num. of</span>
<span class="t" style="left:1177px;top:281px;line-height:16px;font-size:12.36px;color:#212121;transform:scaleX(0.916);transform-origin:0 50%;">Pallets</span>
<div style="left:1607px;top:270px;width:10px;height:26px;background:#fff;overflow:hidden;"></div>
<span class="t" style="left:1607px;top:273px;line-height:16px;font-size:12.36px;color:#212121;transform:scaleX(0.915);transform-origin:0 50%;width:9.500px;overflow:hidden;">Se</span>
<div style="left:434px;top:271.9px;width:18px;height:18px;background:#fff;border:2px solid #005f98;border-radius:3px;box-sizing:border-box;"></div>
<div style="left:434px;top:303.9px;width:18px;height:18px;background:#fff;border:2px solid #005f98;border-radius:3px;box-sizing:border-box;"></div>
<svg class="ic" style="left:593.15px;top:310.75px" width="9.7" height="6.9" viewBox="0 0 9.7 6.9"><path d="M0 0h9.7L4.85 6.9z" fill="#c2c2c2"/></svg>
<div style="left:434px;top:335.9px;width:18px;height:18px;background:#fff;border:2px solid #005f98;border-radius:3px;box-sizing:border-box;"></div>
<svg class="ic" style="left:593.15px;top:342.75px" width="9.7" height="6.9" viewBox="0 0 9.7 6.9"><path d="M0 0h9.7L4.85 6.9z" fill="#c2c2c2"/></svg>
<div style="left:434px;top:366.9px;width:18px;height:18px;background:#fff;border:2px solid #005f98;border-radius:3px;box-sizing:border-box;"></div>
<svg class="ic" style="left:593.15px;top:373.75px" width="9.7" height="6.9" viewBox="0 0 9.7 6.9"><path d="M0 0h9.7L4.85 6.9z" fill="#c2c2c2"/></svg>
<div style="left:434px;top:397.9px;width:18px;height:18px;background:#fff;border:2px solid #005f98;border-radius:3px;box-sizing:border-box;"></div>
<svg class="ic" style="left:593.15px;top:404.75px" width="9.7" height="6.9" viewBox="0 0 9.7 6.9"><path d="M0 0h9.7L4.85 6.9z" fill="#c2c2c2"/></svg>
<div style="left:434px;top:428.9px;width:18px;height:18px;background:#fff;border:2px solid #005f98;border-radius:3px;box-sizing:border-box;"></div>
<svg class="ic" style="left:593.15px;top:435.75px" width="9.7" height="6.9" viewBox="0 0 9.7 6.9"><path d="M0 0h9.7L4.85 6.9z" fill="#c2c2c2"/></svg>
<div style="left:434px;top:459.9px;width:18px;height:18px;background:#fff;border:2px solid #005f98;border-radius:3px;box-sizing:border-box;"></div>
<svg class="ic" style="left:593.15px;top:466.75px" width="9.7" height="6.9" viewBox="0 0 9.7 6.9"><path d="M0 0h9.7L4.85 6.9z" fill="#c2c2c2"/></svg>
<div style="left:434px;top:490.9px;width:18px;height:18px;background:#fff;border:2px solid #005f98;border-radius:3px;box-sizing:border-box;"></div>
<svg class="ic" style="left:593.15px;top:497.75px" width="9.7" height="6.9" viewBox="0 0 9.7 6.9"><path d="M0 0h9.7L4.85 6.9z" fill="#c2c2c2"/></svg>
<div style="left:434px;top:521.9px;width:18px;height:18px;background:#fff;border:2px solid #005f98;border-radius:3px;box-sizing:border-box;"></div>
<svg class="ic" style="left:593.15px;top:528.75px" width="9.7" height="6.9" viewBox="0 0 9.7 6.9"><path d="M0 0h9.7L4.85 6.9z" fill="#c2c2c2"/></svg>
<div style="left:434px;top:552.9px;width:18px;height:18px;background:#fff;border:2px solid #005f98;border-radius:3px;box-sizing:border-box;"></div>
<svg class="ic" style="left:593.15px;top:559.75px" width="9.7" height="6.9" viewBox="0 0 9.7 6.9"><path d="M0 0h9.7L4.85 6.9z" fill="#c2c2c2"/></svg>
<div style="left:434px;top:583.9px;width:18px;height:18px;background:#fff;border:2px solid #005f98;border-radius:3px;box-sizing:border-box;"></div>
<svg class="ic" style="left:593.15px;top:590.75px" width="9.7" height="6.9" viewBox="0 0 9.7 6.9"><path d="M0 0h9.7L4.85 6.9z" fill="#c2c2c2"/></svg>
<div style="left:434px;top:614.9px;width:18px;height:18px;background:#fff;border:2px solid #005f98;border-radius:3px;box-sizing:border-box;"></div>
<svg class="ic" style="left:593.15px;top:621.75px" width="9.7" height="6.9" viewBox="0 0 9.7 6.9"><path d="M0 0h9.7L4.85 6.9z" fill="#c2c2c2"/></svg>
<div style="left:434px;top:645.9px;width:18px;height:18px;background:#fff;border:2px solid #005f98;border-radius:3px;box-sizing:border-box;"></div>
<svg class="ic" style="left:593.15px;top:652.75px" width="9.7" height="6.9" viewBox="0 0 9.7 6.9"><path d="M0 0h9.7L4.85 6.9z" fill="#c2c2c2"/></svg>
<div style="left:434px;top:676.9px;width:18px;height:18px;background:#fff;border:2px solid #005f98;border-radius:3px;box-sizing:border-box;"></div>
<svg class="ic" style="left:593.15px;top:683.75px" width="9.7" height="6.9" viewBox="0 0 9.7 6.9"><path d="M0 0h9.7L4.85 6.9z" fill="#c2c2c2"/></svg>
<div style="left:434px;top:707.9px;width:18px;height:18px;background:#fff;border:2px solid #005f98;border-radius:3px;box-sizing:border-box;"></div>
<svg class="ic" style="left:593.15px;top:714.75px" width="9.7" height="6.9" viewBox="0 0 9.7 6.9"><path d="M0 0h9.7L4.85 6.9z" fill="#c2c2c2"/></svg>
<div style="left:434px;top:738.9px;width:18px;height:18px;background:#fff;border:2px solid #005f98;border-radius:3px;box-sizing:border-box;"></div>
<svg class="ic" style="left:593.15px;top:745.75px" width="9.7" height="6.9" viewBox="0 0 9.7 6.9"><path d="M0 0h9.7L4.85 6.9z" fill="#c2c2c2"/></svg>
<div style="left:434px;top:769.9px;width:18px;height:18px;background:#fff;border:2px solid #005f98;border-radius:3px;box-sizing:border-box;"></div>
<svg class="ic" style="left:593.15px;top:776.75px" width="9.7" height="6.9" viewBox="0 0 9.7 6.9"><path d="M0 0h9.7L4.85 6.9z" fill="#c2c2c2"/></svg>
<div style="left:434px;top:800.9px;width:18px;height:18px;background:#fff;border:2px solid #005f98;border-radius:3px;box-sizing:border-box;"></div>
<svg class="ic" style="left:593.15px;top:807.75px" width="9.7" height="6.9" viewBox="0 0 9.7 6.9"><path d="M0 0h9.7L4.85 6.9z" fill="#c2c2c2"/></svg>
<div style="left:434px;top:831.9px;width:18px;height:18px;background:#fff;border:2px solid #005f98;border-radius:3px;box-sizing:border-box;"></div>
<svg class="ic" style="left:593.15px;top:838.75px" width="9.7" height="6.9" viewBox="0 0 9.7 6.9"><path d="M0 0h9.7L4.85 6.9z" fill="#c2c2c2"/></svg>
<div style="left:434px;top:862.9px;width:18px;height:18px;background:#fff;border:2px solid #005f98;border-radius:3px;box-sizing:border-box;"></div>
<svg class="ic" style="left:593.15px;top:869.75px" width="9.7" height="6.9" viewBox="0 0 9.7 6.9"><path d="M0 0h9.7L4.85 6.9z" fill="#c2c2c2"/></svg>
<div style="left:1617px;top:298px;width:14px;height:590px;background:#fff;"></div>
<svg class="ic" style="left:1619.0px;top:301.0px" width="10" height="6" viewBox="0 0 10 6" fill="none" stroke="#e2e2e2" stroke-width="1"><path d="M1 5l4-4 4 4"/></svg>
<svg class="ic" style="left:1619.0px;top:877.0px" width="10" height="6" viewBox="0 0 10 6" fill="none" stroke="#e2e2e2" stroke-width="1"><path d="M1 1l4 4 4-4"/></svg>
<div style="left:427.5px;top:888px;width:1203.5px;height:14px;background:#fff;"></div>
<svg class="ic" style="left:431.0px;top:890.0px" width="6" height="10" viewBox="0 0 6 10" fill="none" stroke="#e2e2e2" stroke-width="1"><path d="M5 1l-4 4 4 4"/></svg>
<svg class="ic" style="left:1606.0px;top:890.0px" width="6" height="10" viewBox="0 0 6 10" fill="none" stroke="#e2e2e2" stroke-width="1"><path d="M1 1l4 4-4 4"/></svg>
<div style="left:430px;top:916.1px;width:21.1px;height:7.8px;background:#e4e4e4;border-radius:4px;"></div>
<div style="left:426.9px;top:913.9px;width:12.2px;height:12.2px;background:#bdbdbd;border-radius:50%;"></div>
<span class="t" style="left:461px;top:912px;line-height:16px;font-size:12.36px;color:#212121;transform:scaleX(0.936);transform-origin:0 50%;">Estimate</span>
<div style="left:529px;top:916.1px;width:21.1px;height:7.8px;background:#e4e4e4;border-radius:4px;"></div>
<div style="left:525.9px;top:913.9px;width:12.2px;height:12.2px;background:#bdbdbd;border-radius:50%;"></div>
<span class="t" style="left:560px;top:912px;line-height:16px;font-size:12.36px;color:#212121;transform:scaleX(0.922);transform-origin:0 50%;">Layaway</span>
<div style="left:628px;top:916.1px;width:21.1px;height:7.8px;background:#e4e4e4;border-radius:4px;"></div>
<div style="left:624.9px;top:913.9px;width:12.2px;height:12.2px;background:#bdbdbd;border-radius:50%;"></div>
<span class="t" style="left:659px;top:912px;line-height:16px;font-size:12.36px;color:#212121;transform:scaleX(0.944);transform-origin:0 50%;">Is Dropship</span>
<div style="left:740.3px;top:916.1px;width:21.1px;height:7.8px;background:#e4e4e4;border-radius:4px;"></div>
<div style="left:737.2px;top:913.9px;width:12.2px;height:12.2px;background:#bdbdbd;border-radius:50%;"></div>
<span class="t" style="left:771.7px;top:912px;line-height:16px;font-size:12.36px;color:#212121;transform:scaleX(0.954);transform-origin:0 50%;">Vendor Pickup Order</span>
<div style="left:903.7px;top:916.1px;width:21.1px;height:7.8px;background:#e4e4e4;border-radius:4px;"></div>
<div style="left:900.6px;top:913.9px;width:12.2px;height:12.2px;background:#bdbdbd;border-radius:50%;"></div>
<span class="t" style="left:935px;top:912px;line-height:16px;font-size:12.36px;color:#212121;transform:scaleX(0.922);transform-origin:0 50%;">Charge CC</span>
<div style="left:1014.7px;top:916.1px;width:21.1px;height:7.8px;background:#e4e4e4;border-radius:4px;"></div>
<div style="left:1011.6px;top:913.9px;width:12.2px;height:12.2px;background:#bdbdbd;border-radius:50%;"></div>
<span class="t" style="left:1046px;top:912px;line-height:16px;font-size:12.36px;color:#212121;transform:scaleX(0.970);transform-origin:0 50%;">Do not display on shipping schedule</span>
<div style="left:430px;top:939.1px;width:21.1px;height:7.8px;background:#e4e4e4;border-radius:4px;"></div>
<div style="left:426.9px;top:936.9px;width:12.2px;height:12.2px;background:#bdbdbd;border-radius:50%;"></div>
<span class="t" style="left:461px;top:935px;line-height:16px;font-size:12.36px;color:#212121;transform:scaleX(0.970);transform-origin:0 50%;">Require customer acknowledgment</span>
<div style="left:680px;top:939.1px;width:21px;height:7.8px;background:#c6d3fa;border-radius:4px;"></div>
<div style="left:691.8px;top:936.8px;width:12.4px;height:12.4px;background:#005f98;border-radius:50%;"></div>
<span class="t" style="left:712px;top:935px;line-height:16px;font-size:12.36px;color:#212121;transform:scaleX(0.929);transform-origin:0 50%;">Show Order Total on PDF/WEB</span>
<div style="left:894.7px;top:939.1px;width:21.1px;height:7.8px;background:#e4e4e4;border-radius:4px;"></div>
<div style="left:891.6px;top:936.9px;width:12.2px;height:12.2px;background:#bdbdbd;border-radius:50%;"></div>
<span class="t" style="left:926px;top:935px;line-height:16px;font-size:12.36px;color:#212121;transform:scaleX(1.007);transform-origin:0 50%;">Auto email confirmation</span>
<div style="left:1077.7px;top:939.1px;width:21px;height:7.8px;background:#c6d3fa;border-radius:4px;"></div>
<div style="left:1089.5px;top:936.8px;width:12.4px;height:12.4px;background:#005f98;border-radius:50%;"></div>
<span class="t" style="left:1110px;top:935px;line-height:16px;font-size:12.36px;color:#212121;transform:scaleX(0.954);transform-origin:0 50%;">Show item amount on PDF/WEB</span>
<div style="left:430px;top:962.1px;width:21.1px;height:7.8px;background:#e4e4e4;border-radius:4px;"></div>
<div style="left:426.9px;top:959.9px;width:12.2px;height:12.2px;background:#bdbdbd;border-radius:50%;"></div>
<span class="t" style="left:461px;top:958px;line-height:16px;font-size:12.36px;color:#212121;transform:scaleX(0.965);transform-origin:0 50%;">Disallow ship partially</span>
<div style="left:596.7px;top:962.1px;width:21px;height:7.8px;background:#c6d3fa;border-radius:4px;"></div>
<div style="left:608.5px;top:959.8px;width:12.4px;height:12.4px;background:#005f98;border-radius:50%;"></div>
<span class="t" style="left:629.3px;top:958px;line-height:16px;font-size:12.36px;color:#212121;transform:scaleX(0.926);transform-origin:0 50%;">Open Compare Pricing on Sales Order Save and Process</span>
<span class="t" style="left:1365.7px;top:937.5px;line-height:16px;font-size:11.33px;color:#666;transform:scaleX(0.873);transform-origin:0 50%;">TAX</span>
<div style="left:1386.7px;top:932px;width:90px;height:24.7px;background:#f4f4f4;border-radius:3px;"></div>
<span class="t" style="left:1391.7px;top:937px;line-height:16px;font-size:12.36px;color:#333;transform:scaleX(0.865);transform-origin:0 50%;">NYS</span>
<svg class="ic" style="left:1461.85px;top:942.05px" width="9.7" height="6.9" viewBox="0 0 9.7 6.9"><path d="M0 0h9.7L4.85 6.9z" fill="#c6c6c6"/></svg>
<span class="t" style="left:1480.4px;top:936.6px;line-height:16px;font-size:12.36px;color:#333;transform:scaleX(0.828);transform-origin:0 50%;">(8.875 %)</span>
<span class="t" style="left:1552.5px;top:936.8px;line-height:16px;font-size:12.36px;color:#212121;transform:scaleX(0.947);transform-origin:0 50%;">Discount:</span>
<span class="t" style="left:1605.2px;top:936.8px;line-height:16px;font-size:12.36px;color:#005f98;transform:scaleX(0.884);transform-origin:0 50%;">0%</span>
<div style="left:419px;top:982px;width:1221px;height:1px;background:#e0e0e0;"></div>
<div style="left:437px;top:999px;width:96.5px;height:25px;background:#cbcbcb;border-radius:2px;"></div>
<span class="t" style="left:446.10px;top:1004px;line-height:16px;font-size:12.36px;color:#f5f5f5;transform:scaleX(0.856);transform-origin:50% 50%;">VOID ORDER</span>
<div style="left:535px;top:999px;width:22px;height:25px;background:#005f98;border-radius:2px;"></div>
<svg class="ic" style="left:542.1px;top:1010.0px" width="7.800" height="4.200" viewBox="0 0 7.800 4.200"><path d="M0 0h7.800L3.900 4.200z" fill="#fff"/></svg>
<div style="left:1279px;top:999px;width:74.5px;height:25px;background:#eeeeee;border-radius:2px;"></div>
<span class="t" style="left:1291.18px;top:1004px;line-height:16px;font-size:12.36px;color:#005f98;transform:scaleX(0.888);transform-origin:50% 50%;">CANCEL</span>
<div style="left:1364px;top:999px;width:75px;height:25px;background:#005f98;border-radius:2px;"></div>
<span class="t" style="left:1385.47px;top:1004px;line-height:16px;font-size:12.36px;color:#fff;transform:scaleX(0.811);transform-origin:50% 50%;">SAVE</span>
<div style="left:1440px;top:999px;width:22px;height:25px;background:#005f98;border-radius:2px;"></div>
<svg class="ic" style="left:1447.1px;top:1010.0px" width="7.800" height="4.200" viewBox="0 0 7.800 4.200"><path d="M0 0h7.800L3.900 4.200z" fill="#fff"/></svg>
<div style="left:1472px;top:999px;width:137px;height:25px;background:#cbcbcb;border-radius:2px;"></div>
<span class="t" style="left:1486.70px;top:1004px;line-height:16px;font-size:12.36px;color:#f5f5f5;transform:scaleX(0.846);transform-origin:50% 50%;">SAVE &amp; PROCESS</span>
<div style="left:1610px;top:999px;width:22px;height:25px;background:#005f98;border-radius:2px;"></div>
<svg class="ic" style="left:1617.1px;top:1010.0px" width="7.800" height="4.200" viewBox="0 0 7.800 4.200"><path d="M0 0h7.800L3.900 4.200z" fill="#fff"/></svg>
<svg class="ic" style="left:0;top:0" width="1919" height="1039" viewBox="0 0 1919 1039"><rect x="1578.1" y="234.1" width="2.3" height="2.3" fill="#f0f0f0"/><rect x="1582.43" y="234.1" width="2.3" height="2.3" fill="#f0f0f0"/><rect x="1586.76" y="234.1" width="2.3" height="2.3" fill="#f0f0f0"/><rect x="1591.09" y="234.1" width="2.3" height="2.3" fill="#f0f0f0"/><rect x="1578.1" y="246.9" width="2.3" height="2.3" fill="#f0f0f0"/><rect x="1582.43" y="246.9" width="2.3" height="2.3" fill="#f0f0f0"/><rect x="1586.76" y="246.9" width="2.3" height="2.3" fill="#f0f0f0"/><rect x="1591.09" y="246.9" width="2.3" height="2.3" fill="#f0f0f0"/><rect x="1578.1" y="238.37" width="2.3" height="2.3" fill="#f0f0f0"/><rect x="1578.1" y="242.64" width="2.3" height="2.3" fill="#f0f0f0"/><rect x="1591.1" y="238.37" width="2.3" height="2.3" fill="#f0f0f0"/><rect x="1591.1" y="242.64" width="2.3" height="2.3" fill="#f0f0f0"/><rect x="1609.6" y="234.9" width="2.3" height="2.3" fill="#f0f0f0"/><rect x="1613.9" y="234.9" width="2.3" height="2.3" fill="#f0f0f0"/><rect x="1618.2" y="234.9" width="2.3" height="2.3" fill="#f0f0f0"/><rect x="1609.6" y="239" width="2.3" height="2.3" fill="#f0f0f0"/><rect x="1609.6" y="243.1" width="2.3" height="2.3" fill="#f0f0f0"/><rect x="456.4" y="266" width="1.5" height="622" fill="rgba(110,125,140,.085)"/><rect x="496.4" y="266" width="1.5" height="622" fill="rgba(110,125,140,.085)"/><rect x="606.4" y="266" width="1.5" height="622" fill="rgba(110,125,140,.085)"/><rect x="770.7" y="266" width="1.5" height="622" fill="rgba(110,125,140,.085)"/><rect x="850.7" y="266" width="1.5" height="622" fill="rgba(110,125,140,.085)"/><rect x="950.7" y="266" width="1.5" height="622" fill="rgba(110,125,140,.085)"/><rect x="1020.7" y="266" width="1.5" height="622" fill="rgba(110,125,140,.085)"/><rect x="1100.7" y="266" width="1.5" height="622" fill="rgba(110,125,140,.085)"/><rect x="1170.7" y="266" width="1.5" height="622" fill="rgba(110,125,140,.085)"/><rect x="1250.7" y="266" width="1.5" height="622" fill="rgba(110,125,140,.085)"/><rect x="1350.7" y="266" width="1.5" height="622" fill="rgba(110,125,140,.085)"/><rect x="1450.7" y="266" width="1.5" height="622" fill="rgba(110,125,140,.085)"/><rect x="1550.7" y="266" width="1.5" height="622" fill="rgba(110,125,140,.085)"/><rect x="1600.7" y="266" width="1.5" height="622" fill="rgba(110,125,140,.085)"/><rect x="1620.5" y="311.6" width="6.9" height="303.4" fill="#d6d6d6"/><rect x="441.7" y="891.7" width="845.6" height="6.6" fill="#d6d6d6"/></svg>
</div>
<div class="g" id="customer-panel">
<div style="left:1641px;top:158px;width:278px;height:881px;background:#fff;"></div>
<span class="t" style="left:1654.3px;top:169px;line-height:16px;font-size:12.88px;color:#333;transform:scaleX(0.850);transform-origin:0 50%;">THIS ORDER</span>
<span class="t" style="left:1749.5px;top:169px;line-height:16px;font-size:12.88px;color:#333;transform:scaleX(0.848);transform-origin:0 50%;">CUSTOMER</span>
<span class="t" style="left:1859px;top:169px;line-height:16px;font-size:12.88px;color:#333;transform:scaleX(0.810);transform-origin:0 50%;">LOGS</span>
<div style="left:1641px;top:195px;width:278px;height:1px;background:#e0e0e0;"></div>
<div style="left:1734.3px;top:194px;width:92.5px;height:2.3px;background:#005f98;"></div>
<span class="t" style="left:1657px;top:206px;line-height:16px;font-size:13.39px;color:#212121;transform:scaleX(0.939);transform-origin:0 50%;-webkit-text-stroke:.2px #212121;">SUMMARY</span>
<span class="t" style="left:1657px;top:234px;line-height:16px;font-size:11.85px;color:#555;transform:scaleX(0.950);transform-origin:0 50%;">Credit Limit:</span>
<span class="t" style="left:1836.92px;top:234px;line-height:16px;font-size:11.85px;color:#222;transform:scaleX(0.926);transform-origin:100% 50%;">$600,000.00</span>
<span class="t" style="left:1657px;top:249px;line-height:16px;font-size:11.85px;color:#555;transform:scaleX(0.953);transform-origin:0 50%;">Available Credit:</span>
<span class="t" style="left:1823.11px;top:249px;line-height:16px;font-size:11.85px;color:#222;transform:scaleX(0.929);transform-origin:100% 50%;">$-2,743,731.26</span>
<span class="t" style="left:1657px;top:264px;line-height:16px;font-size:11.85px;color:#555;transform:scaleX(0.949);transform-origin:0 50%;">Open Invoices:</span>
<span class="t" style="left:1843.52px;top:264px;line-height:16px;font-size:11.85px;color:#222;transform:scaleX(0.911);transform-origin:100% 50%;">$16,853.85</span>
<span class="t" style="left:1657px;top:279px;line-height:16px;font-size:11.85px;color:#555;transform:scaleX(0.946);transform-origin:0 50%;">Credit:</span>
<span class="t" style="left:1839.57px;top:279px;line-height:16px;font-size:11.85px;color:#222;transform:scaleX(0.925);transform-origin:100% 50%;">$-29,076.79</span>
<span class="t" style="left:1657px;top:294px;line-height:16px;font-size:11.85px;color:#555;transform:scaleX(0.952);transform-origin:0 50%;">Deposits:</span>
<span class="t" style="left:1850.10px;top:294px;line-height:16px;font-size:11.85px;color:#222;transform:scaleX(0.901);transform-origin:100% 50%;">$9,565.75</span>
<span class="t" style="left:1657px;top:309px;line-height:16px;font-size:11.85px;color:#555;transform:scaleX(0.932);transform-origin:0 50%;">Open Balance:</span>
<span class="t" style="left:1843.52px;top:309px;line-height:16px;font-size:11.85px;color:#222;transform:scaleX(0.911);transform-origin:100% 50%;">$12,246.47</span>
<span class="t" style="left:1657px;top:324px;line-height:16px;font-size:11.85px;color:#555;transform:scaleX(0.942);transform-origin:0 50%;">Open Sale Orders:</span>
<span class="t" style="left:1889.61px;top:324px;line-height:16px;font-size:11.85px;color:#222;transform:scaleX(0.910);transform-origin:100% 50%;">67</span>
<span class="t" style="left:1657px;top:339px;line-height:16px;font-size:11.85px;color:#555;transform:scaleX(0.932);transform-origin:0 50%;">Phone:</span>
<span class="t" style="left:1836.92px;top:339px;line-height:16px;font-size:11.85px;color:#222;transform:scaleX(0.911);transform-origin:100% 50%;">8459682536</span>
<span class="t" style="left:1657px;top:354px;line-height:16px;font-size:11.85px;color:#555;transform:scaleX(0.896);transform-origin:0 50%;">Email:</span>
<span class="t" style="left:1838.75px;top:354px;line-height:16px;font-size:11.85px;color:#222;">34@hg.com</span>
<span class="t" style="left:1657px;top:369px;line-height:16px;font-size:11.85px;color:#555;transform:scaleX(0.971);transform-origin:0 50%;">Card on file:</span>
<span class="t" style="left:1840.24px;top:369px;line-height:16px;font-size:11.85px;color:#222;transform:scaleX(0.959);transform-origin:100% 50%;">VISA **1111</span>
<div style="left:1641px;top:392px;width:278px;height:2px;background:#ececec;"></div>
<div style="left:1641px;top:394px;width:278px;height:62px;background:#fff8d4;"></div>
<span class="t" style="left:1657px;top:404px;line-height:16px;font-size:13.39px;color:#212121;transform:scaleX(0.888);transform-origin:0 50%;-webkit-text-stroke:.2px #212121;">NOTE</span>
<span class="t" style="left:1657px;top:429px;line-height:16px;font-size:12.36px;color:#212121;transform:scaleX(0.964);transform-origin:0 50%;">customer notes</span>
<span class="t" style="left:1657px;top:466.5px;line-height:16px;font-size:13.39px;color:#212121;transform:scaleX(0.871);transform-origin:0 50%;-webkit-text-stroke:.2px #212121;">RECENT TRANSACTIONS</span>
<span class="t" style="left:1657.6px;top:502px;line-height:16px;font-size:12.88px;color:#212121;transform:scaleX(0.906);transform-origin:0 50%;font-weight:700;">Sale Order</span>
<svg class="ic" style="left:1871.5px;top:504.5px" width="7" height="11" viewBox="0 0 7 11" fill="none" stroke="#949494" stroke-width="1.700"><path d="M1.200 .8l4.600 4.700L1.200 10.200"/></svg>
<div style="left:1657px;top:525px;width:231px;height:1px;background:#ebebeb;"></div>
<span class="t" style="left:1657.6px;top:533px;line-height:16px;font-size:12.88px;color:#212121;transform:scaleX(0.902);transform-origin:0 50%;font-weight:700;">Ship Order</span>
<svg class="ic" style="left:1871.5px;top:535.5px" width="7" height="11" viewBox="0 0 7 11" fill="none" stroke="#949494" stroke-width="1.700"><path d="M1.200 .8l4.600 4.700L1.200 10.200"/></svg>
<div style="left:1657px;top:556px;width:231px;height:1px;background:#ebebeb;"></div>
<span class="t" style="left:1657.6px;top:564px;line-height:16px;font-size:12.88px;color:#212121;transform:scaleX(0.935);transform-origin:0 50%;font-weight:700;">Invoice</span>
<svg class="ic" style="left:1871.5px;top:566.5px" width="7" height="11" viewBox="0 0 7 11" fill="none" stroke="#949494" stroke-width="1.700"><path d="M1.200 .8l4.600 4.700L1.200 10.200"/></svg>
<div style="left:1657px;top:587px;width:231px;height:1px;background:#ebebeb;"></div>
<span class="t" style="left:1657.6px;top:595px;line-height:16px;font-size:12.88px;color:#212121;transform:scaleX(0.902);transform-origin:0 50%;font-weight:700;">Customer Credit</span>
<svg class="ic" style="left:1871.5px;top:597.5px" width="7" height="11" viewBox="0 0 7 11" fill="none" stroke="#949494" stroke-width="1.700"><path d="M1.200 .8l4.600 4.700L1.200 10.200"/></svg>
<div style="left:1657px;top:618px;width:231px;height:1px;background:#ebebeb;"></div>
<span class="t" style="left:1657.6px;top:626px;line-height:16px;font-size:12.88px;color:#212121;transform:scaleX(0.913);transform-origin:0 50%;font-weight:700;">Payment</span>
<svg class="ic" style="left:1871.5px;top:628.5px" width="7" height="11" viewBox="0 0 7 11" fill="none" stroke="#949494" stroke-width="1.700"><path d="M1.200 .8l4.600 4.700L1.200 10.200"/></svg>
<div style="left:1657px;top:649px;width:231px;height:1px;background:#ebebeb;"></div>
<span class="t" style="left:1657.6px;top:657px;line-height:16px;font-size:12.88px;color:#212121;transform:scaleX(0.914);transform-origin:0 50%;font-weight:700;">Pick Order</span>
<svg class="ic" style="left:1871.5px;top:659.5px" width="7" height="11" viewBox="0 0 7 11" fill="none" stroke="#949494" stroke-width="1.700"><path d="M1.200 .8l4.600 4.700L1.200 10.200"/></svg>
<svg class="ic" style="left:1906.5px;top:669.0px" width="10" height="6" viewBox="0 0 10 6" fill="none" stroke="#e2e2e2" stroke-width="1"><path d="M1 1l4 4 4-4"/></svg>
<svg class="ic" style="left:1906.5px;top:461.5px" width="10" height="6" viewBox="0 0 10 6" fill="none" stroke="#e2e2e2" stroke-width="1"><path d="M1 5l4-4 4 4"/></svg>
<div style="left:1727.5px;top:456px;width:98.2px;height:23px;background:#f2f2f2;border:1px solid #a0a0a0;box-sizing:border-box;box-shadow:1px 1px 2px rgba(0,0,0,.25);"></div>
<span class="t" style="left:1735px;top:460px;line-height:16px;font-size:12.36px;color:#212121;transform:scaleX(0.959);transform-origin:0 50%;">customer notes</span>
<div style="left:1641px;top:679px;width:278px;height:3px;background:#ececec;"></div>
<svg class="ic" style="left:1656.7px;top:690.8px" width="12.3" height="12.7" viewBox="4 1 16 21" preserveAspectRatio="none" fill="#e02424"><path d="M18 8h-1V6c0-2.76-2.24-5-5-5S7 3.24 7 6v2H6c-1.1 0-2 .9-2 2v10c0 1.1.9 2 2 2h12c1.1 0 2-.9 2-2V10c0-1.1-.9-2-2-2zm-6 9c-1.1 0-2-.9-2-2s.9-2 2-2 2 .9 2 2-.9 2-2 2zm3.1-9H8.9V6c0-1.71 1.39-3.1 3.1-3.1 1.71 0 3.1 1.39 3.1 3.1v2z"/></svg>
<span class="t" style="left:1674.3px;top:689.5px;line-height:16px;font-size:12.36px;color:#212121;transform:scaleX(0.920);transform-origin:0 50%;font-weight:700;">ACCOUNT ON HOLD</span>
<span class="t" style="left:1657px;top:713px;line-height:16px;font-size:12.36px;color:#212121;transform:scaleX(0.912);transform-origin:0 50%;font-weight:700;">Past Due:</span>
<span class="t" style="left:1855.30px;top:713px;line-height:16px;font-size:11.85px;color:#212121;transform:scaleX(0.911);transform-origin:100% 50%;">$5,693.17</span>
<div style="left:1641px;top:744px;width:278px;height:4px;background:#ececec;"></div>
<div style="left:1656.7px;top:761px;width:60.1px;height:26px;background:#eeeeee;border-radius:2px;"></div>
<span class="t" style="left:1669.23px;top:766.5px;line-height:16px;font-size:12.36px;color:#005f98;transform:scaleX(0.885);transform-origin:50% 50%;">CARD</span>
<div style="left:1721px;top:761px;width:57.7px;height:26px;background:#eeeeee;border-radius:2px;"></div>
<span class="t" style="left:1728.22px;top:766.5px;line-height:16px;font-size:12.36px;color:#005f98;transform:scaleX(0.878);transform-origin:50% 50%;">CHECK</span>
<div style="left:1782px;top:761px;width:57.8px;height:26px;background:#eeeeee;border-radius:2px;"></div>
<span class="t" style="left:1793.73px;top:766.5px;line-height:16px;font-size:12.36px;color:#005f98;transform:scaleX(0.903);transform-origin:50% 50%;">CASH</span>
<div style="left:1843.3px;top:761px;width:59.7px;height:26px;background:#eeeeee;border-radius:2px;"></div>
<span class="t" style="left:1855.99px;top:766.5px;line-height:16px;font-size:12.36px;color:#005f98;transform:scaleX(0.845);transform-origin:50% 50%;">CRDT</span>
<div style="left:1641px;top:799px;width:278px;height:1px;background:#e6e6e6;"></div>
<span class="t" style="left:1649px;top:808px;line-height:16px;font-size:12.36px;color:#212121;transform:scaleX(0.987);transform-origin:0 50%;font-weight:700;">Delivery</span>
<span class="t" style="left:1649px;top:823px;line-height:16px;font-size:12.36px;color:#212121;transform:scaleX(0.948);transform-origin:0 50%;">Total Qty:</span>
<span class="t" style="left:1889.41px;top:823px;line-height:16px;font-size:11.85px;color:#212121;transform:scaleX(0.910);transform-origin:100% 50%;">0</span>
<span class="t" style="left:1649px;top:838px;line-height:16px;font-size:12.36px;color:#212121;transform:scaleX(0.962);transform-origin:0 50%;">Total Weight:</span>
<span class="t" style="left:1876.89px;top:838px;line-height:16px;font-size:11.85px;color:#212121;transform:scaleX(0.968);transform-origin:100% 50%;">0 lb</span>
<div style="left:1649px;top:861px;width:247px;height:1px;background:#e0e0e0;"></div>
<span class="t" style="left:1649px;top:870px;line-height:16px;font-size:12.36px;color:#212121;transform:scaleX(0.916);transform-origin:0 50%;font-weight:700;">Open Balance</span>
<span class="t" style="left:1649px;top:885px;line-height:16px;font-size:12.36px;color:#212121;transform:scaleX(0.921);transform-origin:0 50%;">SubTotal:</span>
<span class="t" style="left:1866.36px;top:885px;line-height:16px;font-size:11.85px;color:#212121;transform:scaleX(0.894);transform-origin:100% 50%;">$0.00</span>
<span class="t" style="left:1649px;top:900px;line-height:16px;font-size:12.36px;color:#212121;transform:scaleX(0.961);transform-origin:0 50%;">Discount:</span>
<span class="t" style="left:1882.81px;top:900px;line-height:16px;font-size:11.85px;color:#212121;transform:scaleX(0.910);transform-origin:100% 50%;">$0</span>
<span class="t" style="left:1649px;top:915px;line-height:16px;font-size:12.36px;color:#212121;transform:scaleX(0.860);transform-origin:0 50%;">Tax:</span>
<span class="t" style="left:1866.36px;top:915px;line-height:16px;font-size:11.85px;color:#212121;transform:scaleX(0.894);transform-origin:100% 50%;">$0.00</span>
<span class="t" style="left:1649px;top:930px;line-height:16px;font-size:12.36px;color:#212121;transform:scaleX(0.932);transform-origin:0 50%;font-weight:700;">Total:</span>
<span class="t" style="left:1865.06px;top:930px;line-height:16px;font-size:12.36px;color:#212121;transform:scaleX(0.986);transform-origin:100% 50%;font-weight:700;">$0.00</span>
<span class="t" style="left:1649px;top:945px;line-height:16px;font-size:12.36px;color:#005f98;transform:scaleX(0.943);transform-origin:0 50%;">Currency:</span>
<div style="left:1649px;top:968px;width:247px;height:1px;background:#e0e0e0;"></div>
<span class="t" style="left:1649px;top:977px;line-height:16px;font-size:12.36px;color:#212121;transform:scaleX(0.925);transform-origin:0 50%;font-weight:700;">Payments</span>
<span class="t" style="left:1865.06px;top:977px;line-height:16px;font-size:12.36px;color:#212121;transform:scaleX(0.986);transform-origin:100% 50%;font-weight:700;">$0.00</span>
<span class="t" style="left:1649px;top:992px;line-height:16px;font-size:12.36px;color:#212121;transform:scaleX(0.926);transform-origin:0 50%;font-weight:700;">Total Applied:</span>
<span class="t" style="left:1865.06px;top:992px;line-height:16px;font-size:12.36px;color:#212121;transform:scaleX(0.986);transform-origin:100% 50%;font-weight:700;">$0.00</span>
<span class="t" style="left:1649px;top:1007px;line-height:16px;font-size:12.36px;color:#212121;transform:scaleX(0.947);transform-origin:0 50%;font-weight:700;">Amount Due:</span>
<span class="t" style="left:1865.06px;top:1007px;line-height:16px;font-size:12.36px;color:#212121;transform:scaleX(0.986);transform-origin:100% 50%;font-weight:700;">$0.00</span>
<span class="t" style="left:1649px;top:1029px;line-height:16px;font-size:12.36px;color:#212121;transform:scaleX(0.886);transform-origin:0 50%;font-weight:700;">Sales Rep:</span>
<svg class="ic" style="left:1906.5px;top:804.0px" width="10" height="6" viewBox="0 0 10 6" fill="none" stroke="#e2e2e2" stroke-width="1"><path d="M1 5l4-4 4 4"/></svg>
<svg class="ic" style="left:1906.5px;top:1028.0px" width="10" height="6" viewBox="0 0 10 6" fill="none" stroke="#e2e2e2" stroke-width="1"><path d="M1 1l4 4 4-4"/></svg>
<svg class="ic" style="left:0;top:0" width="1919" height="1039" viewBox="0 0 1919 1039"><rect x="1908.2" y="471.5" width="6.5" height="180.5" fill="#d0d0d0"/><rect x="1907.6" y="815.5" width="7.4" height="174.5" fill="#d0d0d0"/></svg>
</div>
<div class="g" id="annotation">
<svg class="ic" style="left:1600px;top:365px" width="319" height="150" viewBox="1600 365 319 150" fill="none"><rect x="1609.900" y="374.500" width="302.600" height="130.600" rx="1.200" stroke="#fc0207" stroke-width="3.200"/></svg>
</div>
</div>
</body></html>
